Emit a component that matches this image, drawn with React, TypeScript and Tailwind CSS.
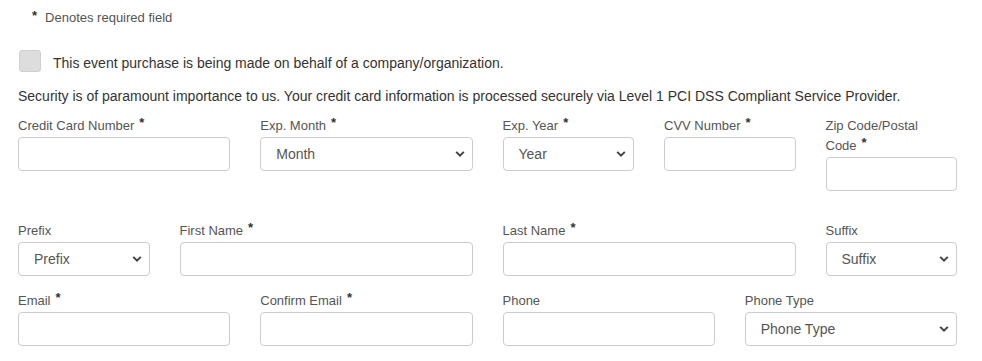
import React from 'react'

const font = { fontFamily: '"Liberation Sans", Arial, sans-serif' }

function Req() {
  return <span className="ml-[5px] align-top leading-[14px] text-[13px] font-bold text-[#333]">*</span>
}

function Label({ text, required }: { text: string; required?: boolean }) {
  return (
    <label className="block text-[13px] leading-[20px] text-[#555] mb-px">
      {text}
      {required && <Req />}
    </label>
  )
}

function TextInput() {
  return (
    <input
      type="text"
      className="block w-full h-[34px] border border-[#ccc] rounded-[4px] bg-white px-3 text-[14px] text-[#555] outline-none"
    />
  )
}

function Chevron() {
  return (
    <svg width="10" height="7" viewBox="0 0 10 7" className="absolute right-[8px] top-1/2 -translate-y-1/2 pointer-events-none">
      <path d="M1.2 1.4 L5 5.2 L8.8 1.4" fill="none" stroke="#444" strokeWidth="2" />
    </svg>
  )
}

function SelectInput({ placeholder }: { placeholder: string }) {
  return (
    <div className="relative">
      <select
        defaultValue=""
        className="block w-full h-[34px] appearance-none border border-[#ccc] rounded-[4px] bg-white pl-[15px] pr-6 text-[14px] text-[#555] outline-none"
        style={font}
      >
        <option value="">{placeholder}</option>
      </select>
      <Chevron />
    </div>
  )
}

interface Field {
  label: string
  required?: boolean
  select?: string
  span: string
}

function Row({ fields }: { fields: Field[] }) {
  return (
    <div className="grid grid-cols-12 gap-x-[30px] w-[939px]">
      {fields.map(f => (
        <div key={f.label} className={f.span}>
          <Label text={f.label} required={f.required} />
          {f.select ? <SelectInput placeholder={f.select} /> : <TextInput />}
        </div>
      ))}
    </div>
  )
}

export default function App() {
  return (
    <div className="w-[982px] h-[361px] bg-white overflow-hidden pl-[18px] flex flex-col" style={font}>
      <div className="pt-[10px] pl-[14px] flex items-start gap-[8px] text-[13px] leading-[16px] text-[#555]">
        <span className="text-[#333] font-bold leading-[12px]">*</span>
        <span>Denotes required field</span>
      </div>

      <div className="mt-[24px] flex items-end gap-[12px]">
        <div className="w-[22px] h-[22px] ml-px rounded-[3px] bg-[#ddd] border border-[#d0d0d0]" />
        <span className="text-[14px] leading-[18px] text-[#333]">
          This event purchase is being made on behalf of a company/organization.
        </span>
      </div>

      <p className="mt-[14px] mb-[10px] text-[14px] leading-[20px] text-[#333]">
        Security is of paramount importance to us. Your credit card information is processed securely via Level 1 PCI DSS Compliant Service Provider.
      </p>

      <div className="flex flex-col gap-[15px]">
        <div className="pb-[15px]">
          <Row
            fields={[
              { label: 'Credit Card Number', required: true, span: 'col-span-3' },
              { label: 'Exp. Month', required: true, select: 'Month', span: 'col-span-3' },
              { label: 'Exp. Year', required: true, select: 'Year', span: 'col-span-2' },
              { label: 'CVV Number', required: true, span: 'col-span-2' },
              { label: 'Zip Code/Postal Code', required: true, span: 'col-span-2' },
            ]}
          />
        </div>
        <Row
          fields={[
            { label: 'Prefix', select: 'Prefix', span: 'col-span-2' },
            { label: 'First Name', required: true, span: 'col-span-4' },
            { label: 'Last Name', required: true, span: 'col-span-4' },
            { label: 'Suffix', select: 'Suffix', span: 'col-span-2' },
          ]}
        />
        <Row
          fields={[
            { label: 'Email', required: true, span: 'col-span-3' },
            { label: 'Confirm Email', required: true, span: 'col-span-3' },
            { label: 'Phone', span: 'col-span-3' },
            { label: 'Phone Type', select: 'Phone Type', span: 'col-span-3' },
          ]}
        />
      </div>
    </div>
  )
}
